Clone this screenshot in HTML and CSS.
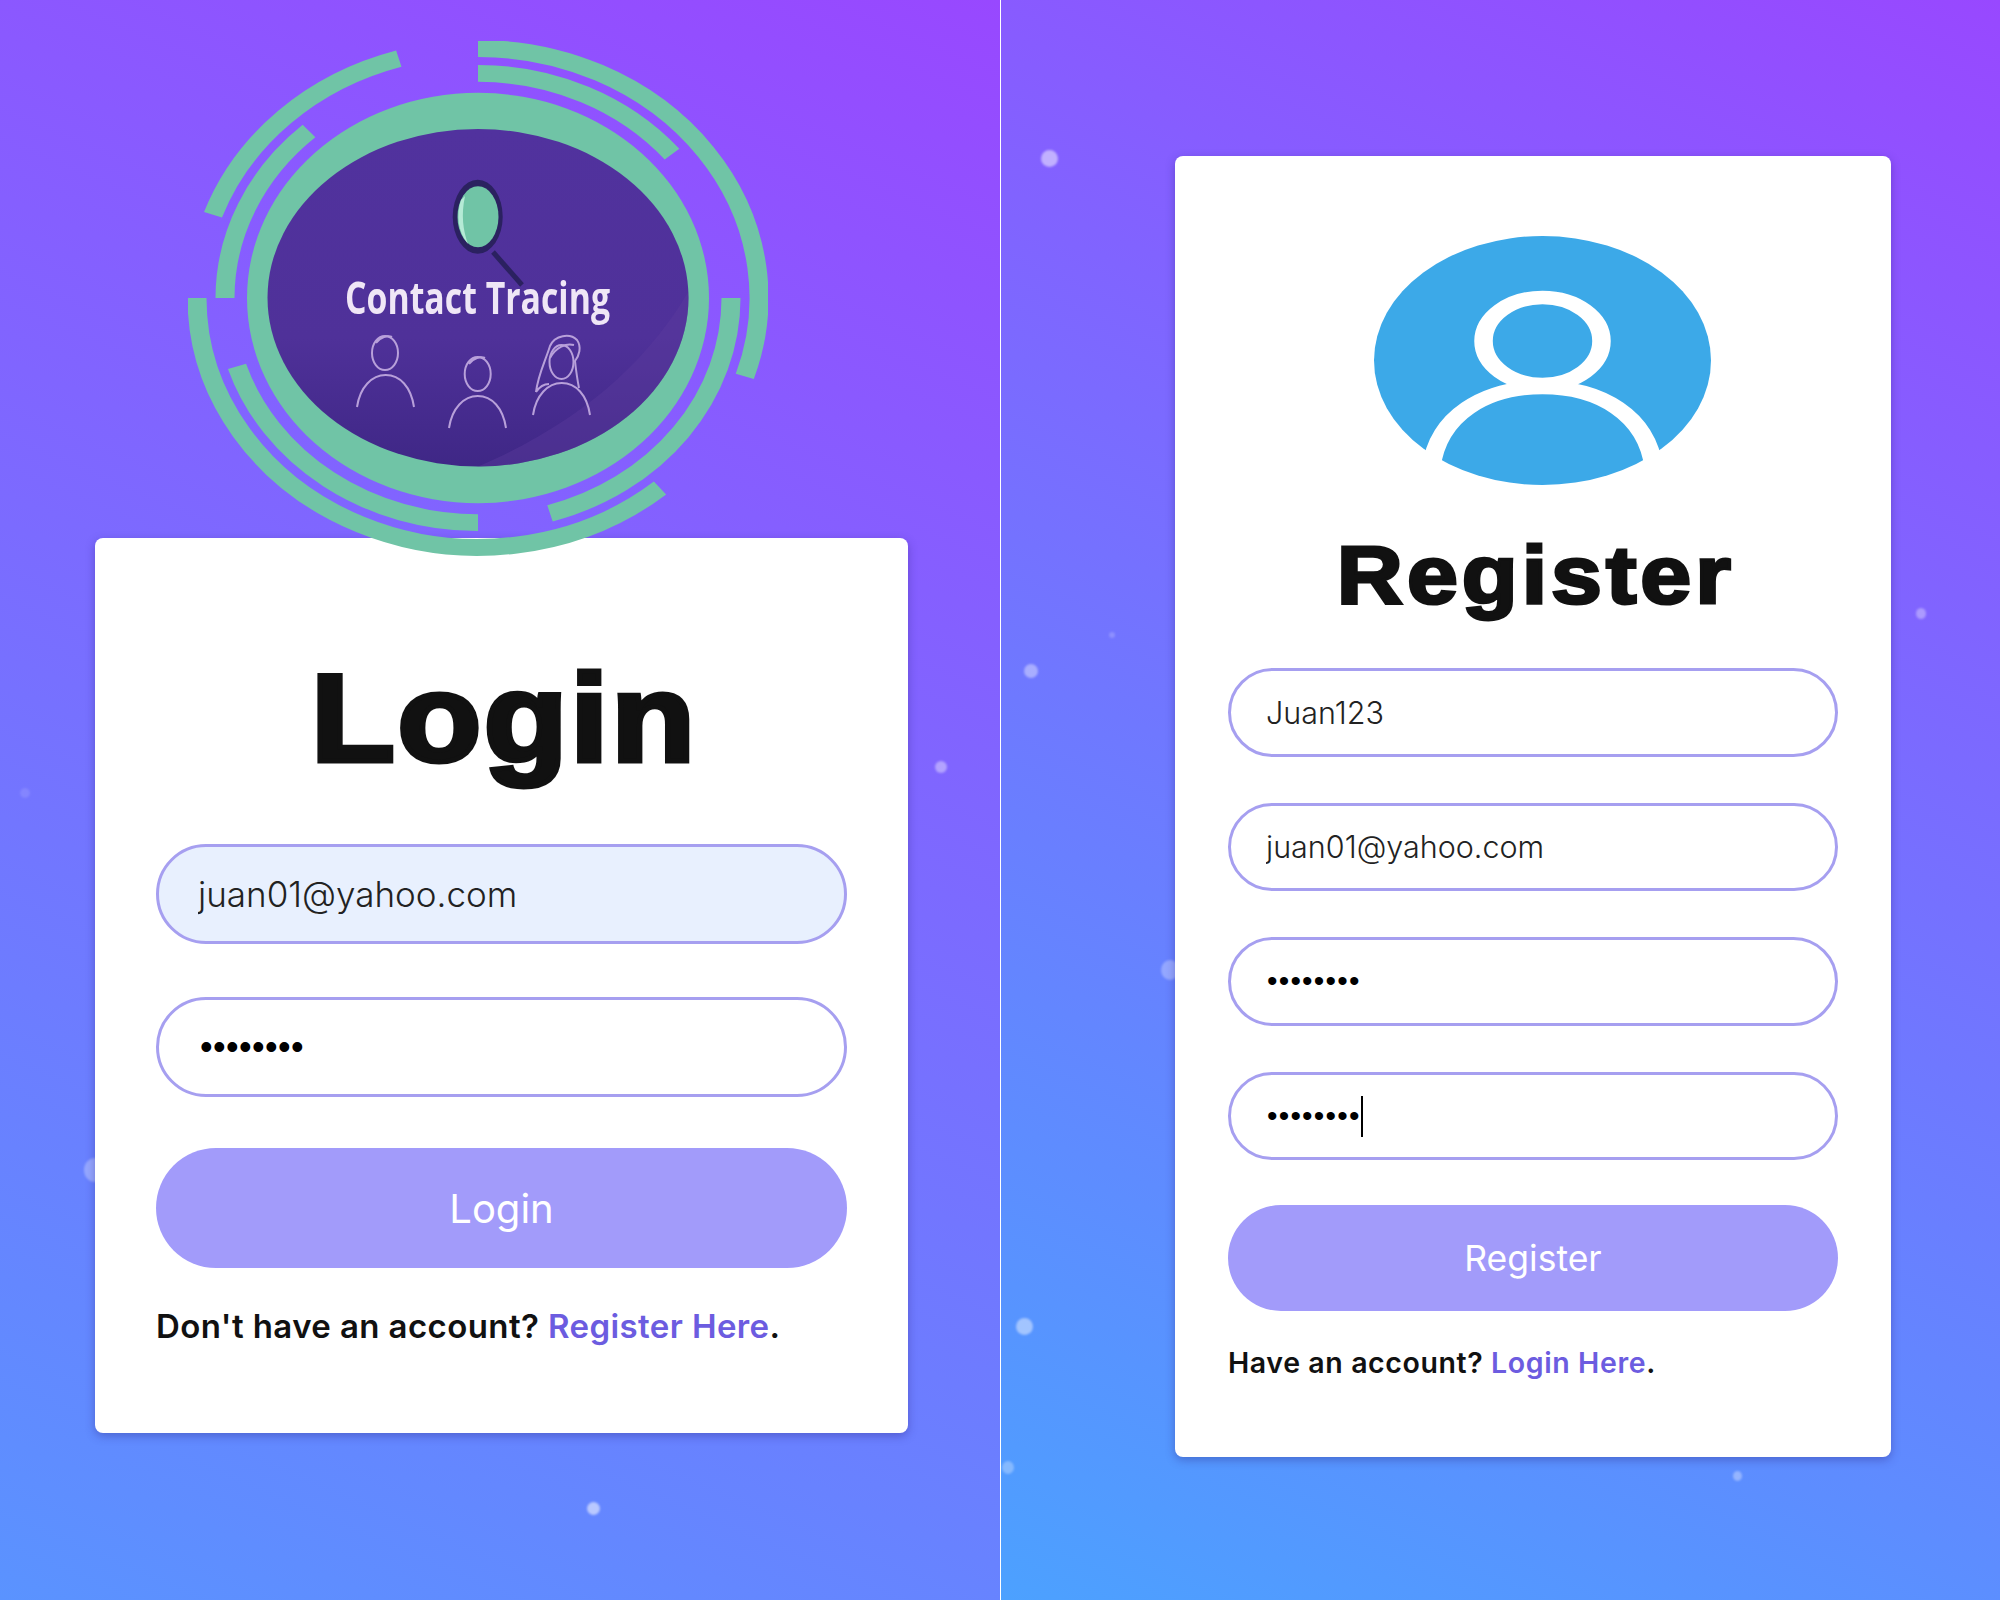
FILE: index.html
```html
<!DOCTYPE html>
<html lang="en">
<head>
<meta charset="utf-8">
<title>Contact Tracing</title>
<link rel="stylesheet" href="styles.css">
</head>
<body>
<main class="screens">
  <section class="panel panel-login">
    <span class="dot d1"></span><span class="dot d2"></span><span class="dot d3"></span><span class="dot d4"></span>
    <svg class="logo" viewBox="188 41 580 515" role="img" aria-label="Contact Tracing logo">
      <defs>
        <linearGradient id="disc" x1="0" y1="0" x2="0" y2="1">
          <stop offset="0" stop-color="#51329e"/>
          <stop offset=".62" stop-color="#4f3199"/>
          <stop offset="1" stop-color="#3f2786"/>
        </linearGradient>
        <clipPath id="discClip"><ellipse cx="478" cy="297.7" rx="210.5" ry="168.7"/></clipPath>
      </defs>
      <g transform="translate(478 298) scale(1 .888)">
        <g class="ring">
          <path d="M0 -281A281 281 0 0 1 266.800 88.300"/>
          <path d="M-79.200 -269.600A281 281 0 0 0 -265 -93.700"/>
          <path d="M-281 0A281 281 0 0 0 182 214"/>
          <path d="M0 -253A253 253 0 0 1 194 -162"/>
          <path d="M253 0A253 253 0 0 1 72 242.500"/>
          <path d="M-241 77A253 253 0 0 0 0 253"/>
          <path d="M-253 0A253 253 0 0 1 -169 -188"/>
        </g>
        <circle r="231" class="ring-main"/>
      </g>
      <ellipse cx="478" cy="297.700" rx="210.500" ry="168.700" fill="url(#disc)"/>
      <path clip-path="url(#discClip)" class="sheen" d="M700 270C660 350 590 420 470 470L700 470Z"/>
      <path class="handle" d="M493 252L522 285"/>
      <ellipse cx="477.700" cy="216.700" rx="25" ry="37" class="glass-rim"/>
      <ellipse cx="478" cy="216.700" rx="20.500" ry="30.500" class="glass"/>
      <path class="glass-shine" d="M461 200C456 215 458 232 468 244C463 230 461 215 465 196Z"/>
      <text class="logo-text" x="477.500" y="314" textLength="265" lengthAdjust="spacingAndGlyphs" text-anchor="middle">Contact Tracing</text>
      <g class="people">
        <ellipse cx="385" cy="353" rx="13" ry="17"/>
        <path d="M376 343C380 337 388 335 392 337M357 407C360 387 372 375 385.700 375C400 375 411 387 414 407"/>
        <ellipse cx="477.700" cy="374" rx="13" ry="17"/>
        <path d="M469 364C473 358 481 356 485 358M449 428C452 408 464 396 477.700 396C492 396 503 408 506 428"/>
        <ellipse cx="561.500" cy="362" rx="12" ry="17"/>
        <path d="M533 415C536 395 548 383 561.700 383C576 383 587 395 590 415M536 392C538 375 545 362 550 346C555 335 570 333 577 340C582 347 579 356 575 361C576 370 577 378 579 388M536 392C540 386 544 384 549 384M550 358C556 347 566 343 574 345"/>
      </g>
    </svg>
    <form class="card card-login">
      <h1 class="title title-login">Login</h1>
      <input class="field field-lg field-filled" type="email" value="juan01@yahoo.com" aria-label="Email">
      <input class="field field-lg pw pw-lg" type="password" value="password" aria-label="Password">
      <button class="submit submit-lg" type="button">Login</button>
      <p class="note note-lg">Don't have an account? <a href="#register">Register Here</a>.</p>
    </form>
  </section>
  <section class="panel panel-register" id="register">
    <span class="dot d5"></span><span class="dot d6"></span><span class="dot d7"></span><span class="dot d8"></span><span class="dot d9"></span><span class="dot d10"></span><span class="dot d11"></span><span class="dot d12"></span>
    <form class="card card-register">
      <svg class="avatar" viewBox="0 0 100 100" preserveAspectRatio="none" role="img" aria-label="User">
        <circle cx="50" cy="50" r="50" class="avatar-disc"/>
        <circle cx="50" cy="42.200" r="17.500" class="avatar-line"/>
        <path d="M17 93C19 72 33 60.800 50 60.800S81 72 83 93" class="avatar-line"/>
      </svg>
      <h1 class="title title-register">Register</h1>
      <input class="field field-sm" type="text" value="Juan123" aria-label="Username">
      <input class="field field-sm" type="email" value="juan01@yahoo.com" aria-label="Email">
      <input class="field field-sm pw pw-sm" type="password" value="password" aria-label="Password">
      <div class="caret-wrap">
        <input class="field field-sm pw pw-sm" type="password" value="password" aria-label="Confirm password">
        <span class="caret"></span>
      </div>
      <button class="submit submit-sm" type="button">Register</button>
      <p class="note note-sm">Have an account? <a href="#login">Login Here</a>.</p>
    </form>
  </section>
</main>
</body>
</html>
```

FILE: styles.css
```css
* { box-sizing: border-box; }
html, body { margin: 0; height: 100%; }
body { font-family: Inter, "Noto Sans", sans-serif; background: #fff; }

.screens { display: flex; width: 2000px; height: 1600px; gap: 1px; overflow: hidden; }

.panel { position: relative; height: 1600px; overflow: hidden; display: flex; flex-direction: column; align-items: flex-start; }
.panel-login { width: 1000px; padding: 41px 0 0 95px; background: linear-gradient(203deg, #9848ff 0%, #5a93ff 100%); }
.panel-register { width: 999px; padding: 156px 0 0 174px; background: linear-gradient(203deg, #9848ff 0%, #4ca1ff 100%); }

.dot { position: absolute; border-radius: 50%; background: rgba(255,255,255,.5); filter: blur(1px); }
.d1 { left: 935px; top: 761px; width: 12px; height: 12px; background: rgba(255,255,255,.4); }
.d2 { left: 20px; top: 788px; width: 10px; height: 10px; background: rgba(255,255,255,.12); }
.d3 { left: 84px; top: 1158px; width: 22px; height: 24px; background: rgba(255,255,255,.3); }
.d4 { left: 587px; top: 1502px; width: 13px; height: 13px; background: rgba(255,255,255,.55); }
.d5 { left: 40px; top: 150px; width: 17px; height: 17px; }
.d6 { left: 23px; top: 664px; width: 14px; height: 14px; background: rgba(255,255,255,.4); }
.d7 { left: 108px; top: 632px; width: 6px; height: 6px; background: rgba(255,255,255,.2); }
.d8 { left: 15px; top: 1318px; width: 17px; height: 17px; background: rgba(255,255,255,.45); }
.d9 { left: 1px; top: 1461px; width: 12px; height: 13px; background: rgba(255,255,255,.3); }
.d10 { left: 915px; top: 608px; width: 10px; height: 11px; background: rgba(255,255,255,.35); }
.d11 { left: 732px; top: 1471px; width: 9px; height: 10px; background: rgba(255,255,255,.35); }
.d12 { left: 160px; top: 960px; width: 18px; height: 20px; background: rgba(255,255,255,.3); }

.logo { position: relative; z-index: 1; display: block; width: 580px; height: 515px; margin: 0 0 -18px 93px; flex: none; filter: blur(.5px); }
.ring path { fill: none; stroke: #70c4a6; stroke-width: 19; }
.ring-main { fill: #70c4a6; }
.sheen { fill: #5c3d9e; opacity: .4; }
.handle { fill: none; stroke: #2b2160; stroke-width: 5; }
.glass-rim { fill: #2b2160; }
.glass { fill: #70c4a6; }
.glass-shine { fill: #b5ead6; }
.logo-text { font-family: "Open Sans", sans-serif; font-weight: 700; font-size: 45px; fill: #efe6f6; }
.people { fill: none; stroke: #b8a0da; stroke-width: 2; }

.card { position: relative; display: flex; flex-direction: column; align-items: flex-start; flex: none; background: #fff; border-radius: 8px; box-shadow: 0 3px 10px rgba(40,30,120,.35); }
.card-login { width: 813px; padding: 115.500px 61px 87px 61px; }
.card-register { width: 716px; padding: 80px 53px 76px 53px; }

.title { margin: 0; align-self: stretch; text-align: center; font-family: "Liberation Sans", Arial, sans-serif; font-weight: 700; color: #111; }
.title-login { font-size: 124px; line-height: 128px; letter-spacing: 2.500px; margin-bottom: 62.500px; padding-left: 5px; transform: scaleX(1.105); -webkit-text-stroke: 5px #111; }
.title-register { font-size: 81px; line-height: 84px; letter-spacing: 3.500px; margin: 47.500px 0 51.500px; padding-left: 5px; transform: scaleX(1.13); -webkit-text-stroke: 3px #111; }

.avatar { display: block; width: 337px; height: 249px; margin-left: 146px; flex: none; }
.avatar-disc { fill: #3ca9e8; }
.avatar-line { fill: none; stroke: #fff; stroke-width: 5.500; }

.field { display: block; border: 3.500px solid #a69ff0; border-radius: 60px; background: #fff; color: #222; font-family: Inter, sans-serif; font-weight: 300; outline: none; }
.field-lg { width: 691px; height: 100px; padding: 0 39px; font-size: 35px; margin-bottom: 53px; }
.field-sm { width: 610px; height: 88.500px; padding: 0 35px; font-size: 30.500px; margin-bottom: 46px; }
.field-filled { background: #e8f0fe; }
.pw { font-family: "Liberation Sans", sans-serif; color: #000; }
.pw-lg { font-size: 36px; letter-spacing: .400px; margin-bottom: 51px; padding-left: 41px; }
.pw-sm { font-size: 30px; letter-spacing: 1.200px; padding-left: 36px; }

.caret-wrap { position: relative; margin-bottom: -1px; }
.caret { position: absolute; left: 133px; top: 24px; width: 2px; height: 41px; background: #000; }

.submit { display: block; border: 0; background: #a29bfa; color: #fff; font-family: Inter, sans-serif; font-weight: 400; border-radius: 60px; }
.submit-lg { width: 691px; height: 120px; font-size: 40px; }
.submit-sm { width: 610px; height: 106px; font-size: 35.500px; }

.note { margin: 0; color: #111; font-weight: 600; }
.note a { color: #6c5ce0; text-decoration: none; }
.note-lg { margin-top: 38px; font-size: 33px; line-height: 40px; letter-spacing: .400px; }
.note-sm { margin-top: 33.500px; font-size: 28.500px; line-height: 36px; letter-spacing: .600px; }
```
